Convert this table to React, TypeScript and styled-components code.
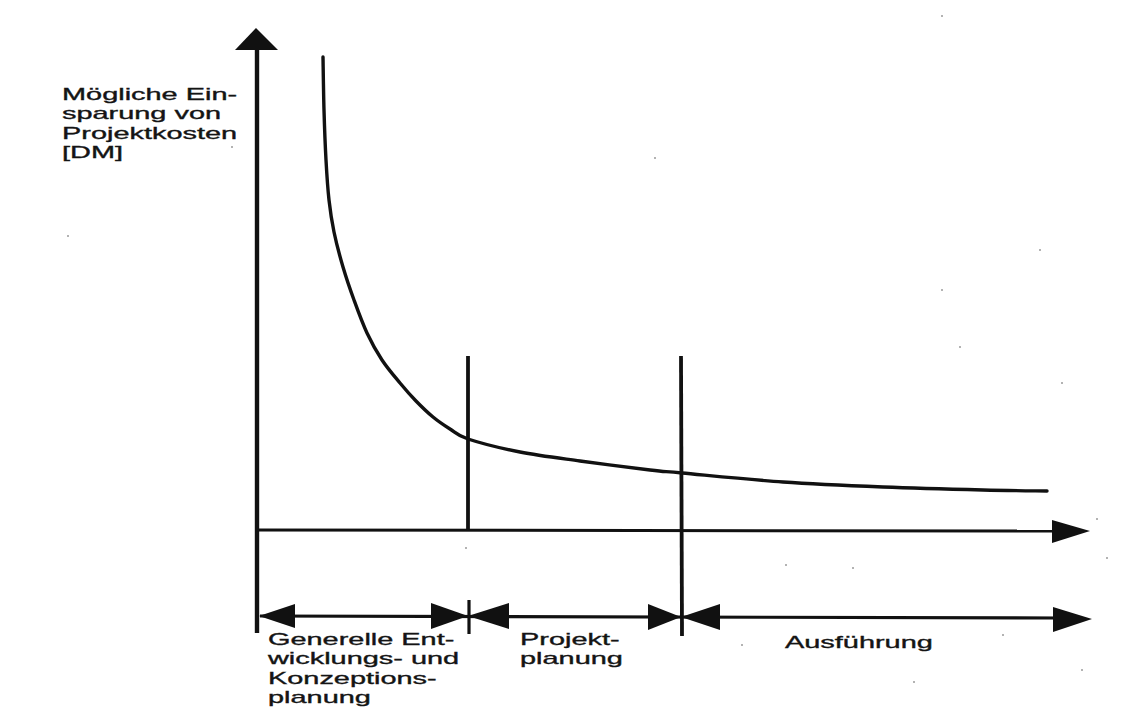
import React from "react";
import styled, { createGlobalStyle } from "styled-components";

const GlobalStyle = createGlobalStyle`
  html, body {
    margin: 0;
    padding: 0;
    background: #ffffff;
  }
`;

type Pt = [number, number];

// hand-traced points of the savings curve
const curvePoints: Pt[] = [
  [323, 57], [324, 110], [326, 160], [329, 200], [334, 232], [343, 267],
  [354, 300], [367, 333], [382, 360], [400, 383], [416, 401], [433, 417],
  [450, 429], [468, 439], [520, 452], [580, 461], [650, 470], [682, 473],
  [783, 482], [883, 487], [983, 490], [1047, 491],
];

const smoothPath = (pts: Pt[]) => {
  let d = `M ${pts[0][0]} ${pts[0][1]}`;
  for (let i = 0; i < pts.length - 1; i++) {
    const p0 = pts[i - 1] || pts[i];
    const p1 = pts[i];
    const p2 = pts[i + 1];
    const p3 = pts[i + 2] || p2;
    const c1x = p1[0] + (p2[0] - p0[0]) / 6;
    const c1y = p1[1] + (p2[1] - p0[1]) / 6;
    const c2x = p2[0] - (p3[0] - p1[0]) / 6;
    const c2y = p2[1] - (p3[1] - p1[1]) / 6;
    d += ` C ${c1x} ${c1y} ${c2x} ${c2y} ${p2[0]} ${p2[1]}`;
  }
  return d;
};

const specks: Pt[] = [
  [466, 548], [655, 158], [1062, 383], [1097, 519], [942, 290], [960, 347],
  [914, 682], [1082, 670], [1040, 250], [853, 568], [786, 565], [232, 147],
  [68, 236], [1003, 635], [1107, 558], [742, 645], [942, 16],
];

const Figure = styled.div`
  position: relative;
  width: 1146px;
  height: 721px;
  overflow: hidden;
  background: #ffffff;
`;

const Chart = styled.svg`
  display: block;
  width: 1146px;
  height: 721px;
`;

const Label = styled.div<{ $left: number; $top: number }>`
  position: absolute;
  left: ${(p) => p.$left}px;
  top: ${(p) => p.$top}px;
  font-family: "Liberation Sans", Arial, sans-serif;
  font-size: 17px;
  line-height: 19.4px;
  color: #141414;
  -webkit-text-stroke: 0.35px #141414;
  white-space: nowrap;
  transform: scaleX(1.7);
  transform-origin: 0 0;
`;

const Line = styled.span`
  display: block;
`;

const Axis = ({ lines, left, top }: { lines: string[]; left: number; top: number }) => (
  <Label $left={left} $top={top}>
    {lines.map((l) => (
      <Line key={l}>{l}</Line>
    ))}
  </Label>
);

const ink = "#111";

const App = () => {
  return (
    <>
      <GlobalStyle />
      <Figure>
        <Chart viewBox="0 0 1146 721">
          {/* y axis */}
          <line x1={257} y1={45} x2={257} y2={633} stroke={ink} strokeWidth={4.4} />
          <polygon points="256,28 235,50 278,50" fill={ink} />

          {/* x axis */}
          <line x1={257} y1={530} x2={1060} y2={531} stroke={ink} strokeWidth={3} />
          <polygon points="1090,531 1052,520 1052,543" fill={ink} />

          {/* phase separators */}
          <line x1={468} y1={356} x2={468} y2={530} stroke={ink} strokeWidth={3.8} />
          <line x1={681} y1={356} x2={682} y2={636} stroke={ink} strokeWidth={3.8} />

          {/* phase arrow row */}
          <line x1={260} y1={616} x2={1060} y2={618} stroke={ink} strokeWidth={3.2} />
          <polygon points="259,616 295,604 295,628" fill={ink} />
          <polygon points="468,616 431,603 431,629" fill={ink} />
          <polygon points="468,616 509,603 509,629" fill={ink} />
          <line x1={469} y1={600} x2={469} y2={634} stroke={ink} strokeWidth={3.2} />
          <polygon points="681,617 648,604 648,630" fill={ink} />
          <polygon points="681,617 720,604 720,630" fill={ink} />
          <polygon points="1092,619 1053,607 1053,632" fill={ink} />

          {/* savings curve */}
          <path
            d={smoothPath(curvePoints)}
            fill="none"
            stroke={ink}
            strokeWidth={3.4}
            strokeLinecap="round"
            strokeLinejoin="round"
          />

          {specks.map(([x, y]) => (
            <circle key={`${x}-${y}`} cx={x} cy={y} r={1} fill="#9a9a9a" />
          ))}
        </Chart>

        <Axis left={62} top={85} lines={["Mögliche Ein-", "sparung von", "Projektkosten", "[DM]"]} />
        <Axis
          left={268}
          top={630}
          lines={["Generelle Ent-", "wicklungs- und", "Konzeptions-", "planung"]}
        />
        <Axis left={520} top={630} lines={["Projekt-", "planung"]} />
        <Axis left={785} top={633} lines={["Ausführung"]} />
      </Figure>
    </>
  );
};

export default App;
